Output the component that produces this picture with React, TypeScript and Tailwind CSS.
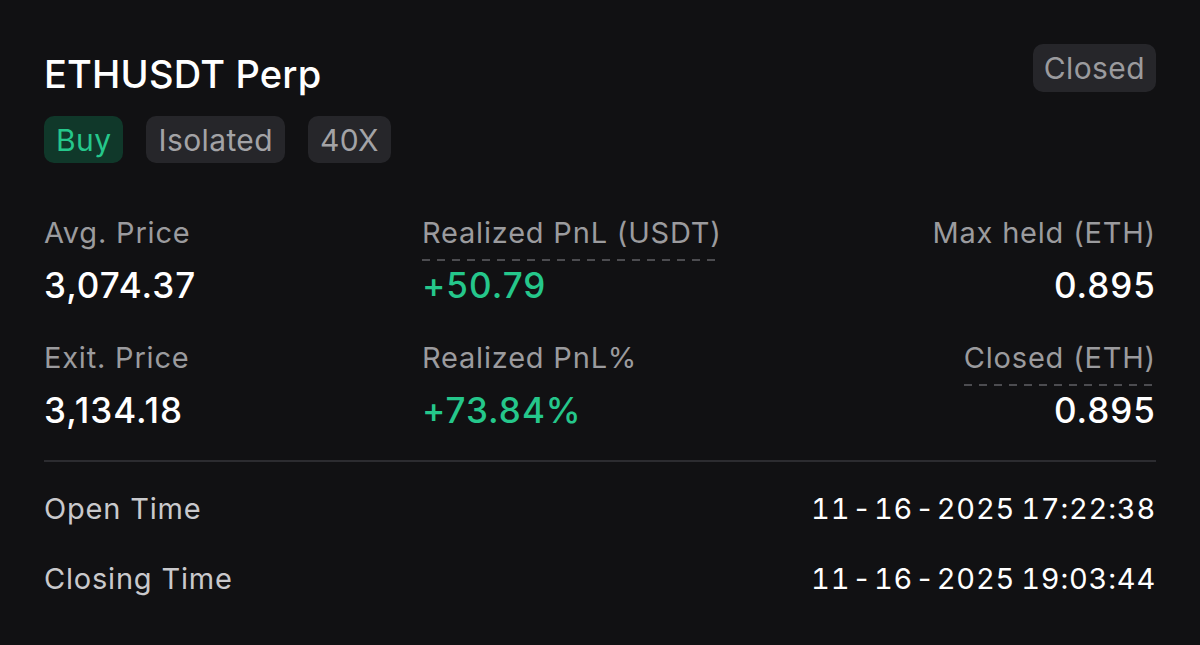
import type { ReactNode } from 'react'

function Tag({ children, green }: { children: ReactNode; green?: boolean }) {
  return (
    <span
      className={`flex h-[47px] items-center rounded-[10px] px-[12px] text-[30px] leading-none tracking-[0.4px] ${
        green ? 'bg-[#10382a] text-[#25c78b]' : 'bg-[#26262a] text-[#a3a3a6]'
      }`}
    >
      {children}
    </span>
  )
}

function Stat({
  label,
  value,
  align = 'left',
  dashed,
  green,
}: {
  label: string
  value: string
  align?: 'left' | 'right'
  dashed?: boolean
  green?: boolean
}) {
  return (
    <div className={`flex flex-col ${align === 'right' ? 'items-end' : 'items-start'}`}>
      <div className="flex flex-col">
        <span className="pb-[9px] text-[29px] leading-[34px] tracking-[0.8px] text-[#9b9b9e]">{label}</span>
        <div
          className={`h-[2px] ${
            dashed ? 'bg-[repeating-linear-gradient(to_right,#4c4c50_0_8px,transparent_8px_15px)]' : ''
          }`}
        />
      </div>
      <span
        className={`mt-[3px] text-[35px] font-medium leading-[42px] tracking-[1px] ${
          green ? 'text-[#25c78b]' : 'text-white'
        }`}
      >
        {value}
      </span>
    </div>
  )
}

function DateTime({ date, time }: { date: string[]; time: string }) {
  return (
    <span className="flex items-center tabular-nums text-white">
      {date.map((part, i) => (
        <span key={i} className="flex items-center">
          {i > 0 && <span className="mx-[2px]">-</span>}
          {part}
        </span>
      ))}
      <span className="ml-[6px]">{time}</span>
    </span>
  )
}

export default function App() {
  return (
    <div
      className="h-[645px] w-[1200px] bg-[#111113] px-[44px] pt-[44px] text-white"
      style={{ fontFamily: 'Inter, "Noto Sans", sans-serif' }}
    >
      <div className="flex items-start justify-between">
        <div className="flex flex-col">
          <h1 className="text-[38px] font-medium leading-[60px] tracking-[0.2px] text-white">ETHUSDT Perp</h1>
          <div className="mt-[12px] flex gap-[23px]">
            <Tag green>Buy</Tag>
            <Tag>Isolated</Tag>
            <Tag>40X</Tag>
          </div>
        </div>
        <span className="flex h-[48px] items-center rounded-[10px] bg-[#26262a] px-[11px] text-[30px] leading-none tracking-[0.4px] text-[#9b9b9e]">
          Closed
        </span>
      </div>

      <div className="mt-[53px] grid grid-cols-[378px_1fr_1fr] gap-y-[35px]">
        <Stat label="Avg. Price" value="3,074.37" />
        <Stat label="Realized PnL (USDT)" value="+50.79" dashed green />
        <Stat label="Max held (ETH)" value="0.895" align="right" />
        <Stat label="Exit. Price" value="3,134.18" />
        <Stat label="Realized PnL%" value="+73.84%" green />
        <Stat label="Closed (ETH)" value="0.895" align="right" dashed />
      </div>

      <div className="mt-[29px] h-[2px] bg-[#2c2c30]" />

      <div className="mt-[30px] flex flex-col gap-[36px] text-[29px] leading-[34px] tracking-[0.8px]">
        <div className="flex justify-between">
          <span className="text-[#c9c9cc]">Open Time</span>
          <DateTime date={['11', '16', '2025']} time="17:22:38" />
        </div>
        <div className="flex justify-between">
          <span className="text-[#c9c9cc]">Closing Time</span>
          <DateTime date={['11', '16', '2025']} time="19:03:44" />
        </div>
      </div>
    </div>
  )
}
